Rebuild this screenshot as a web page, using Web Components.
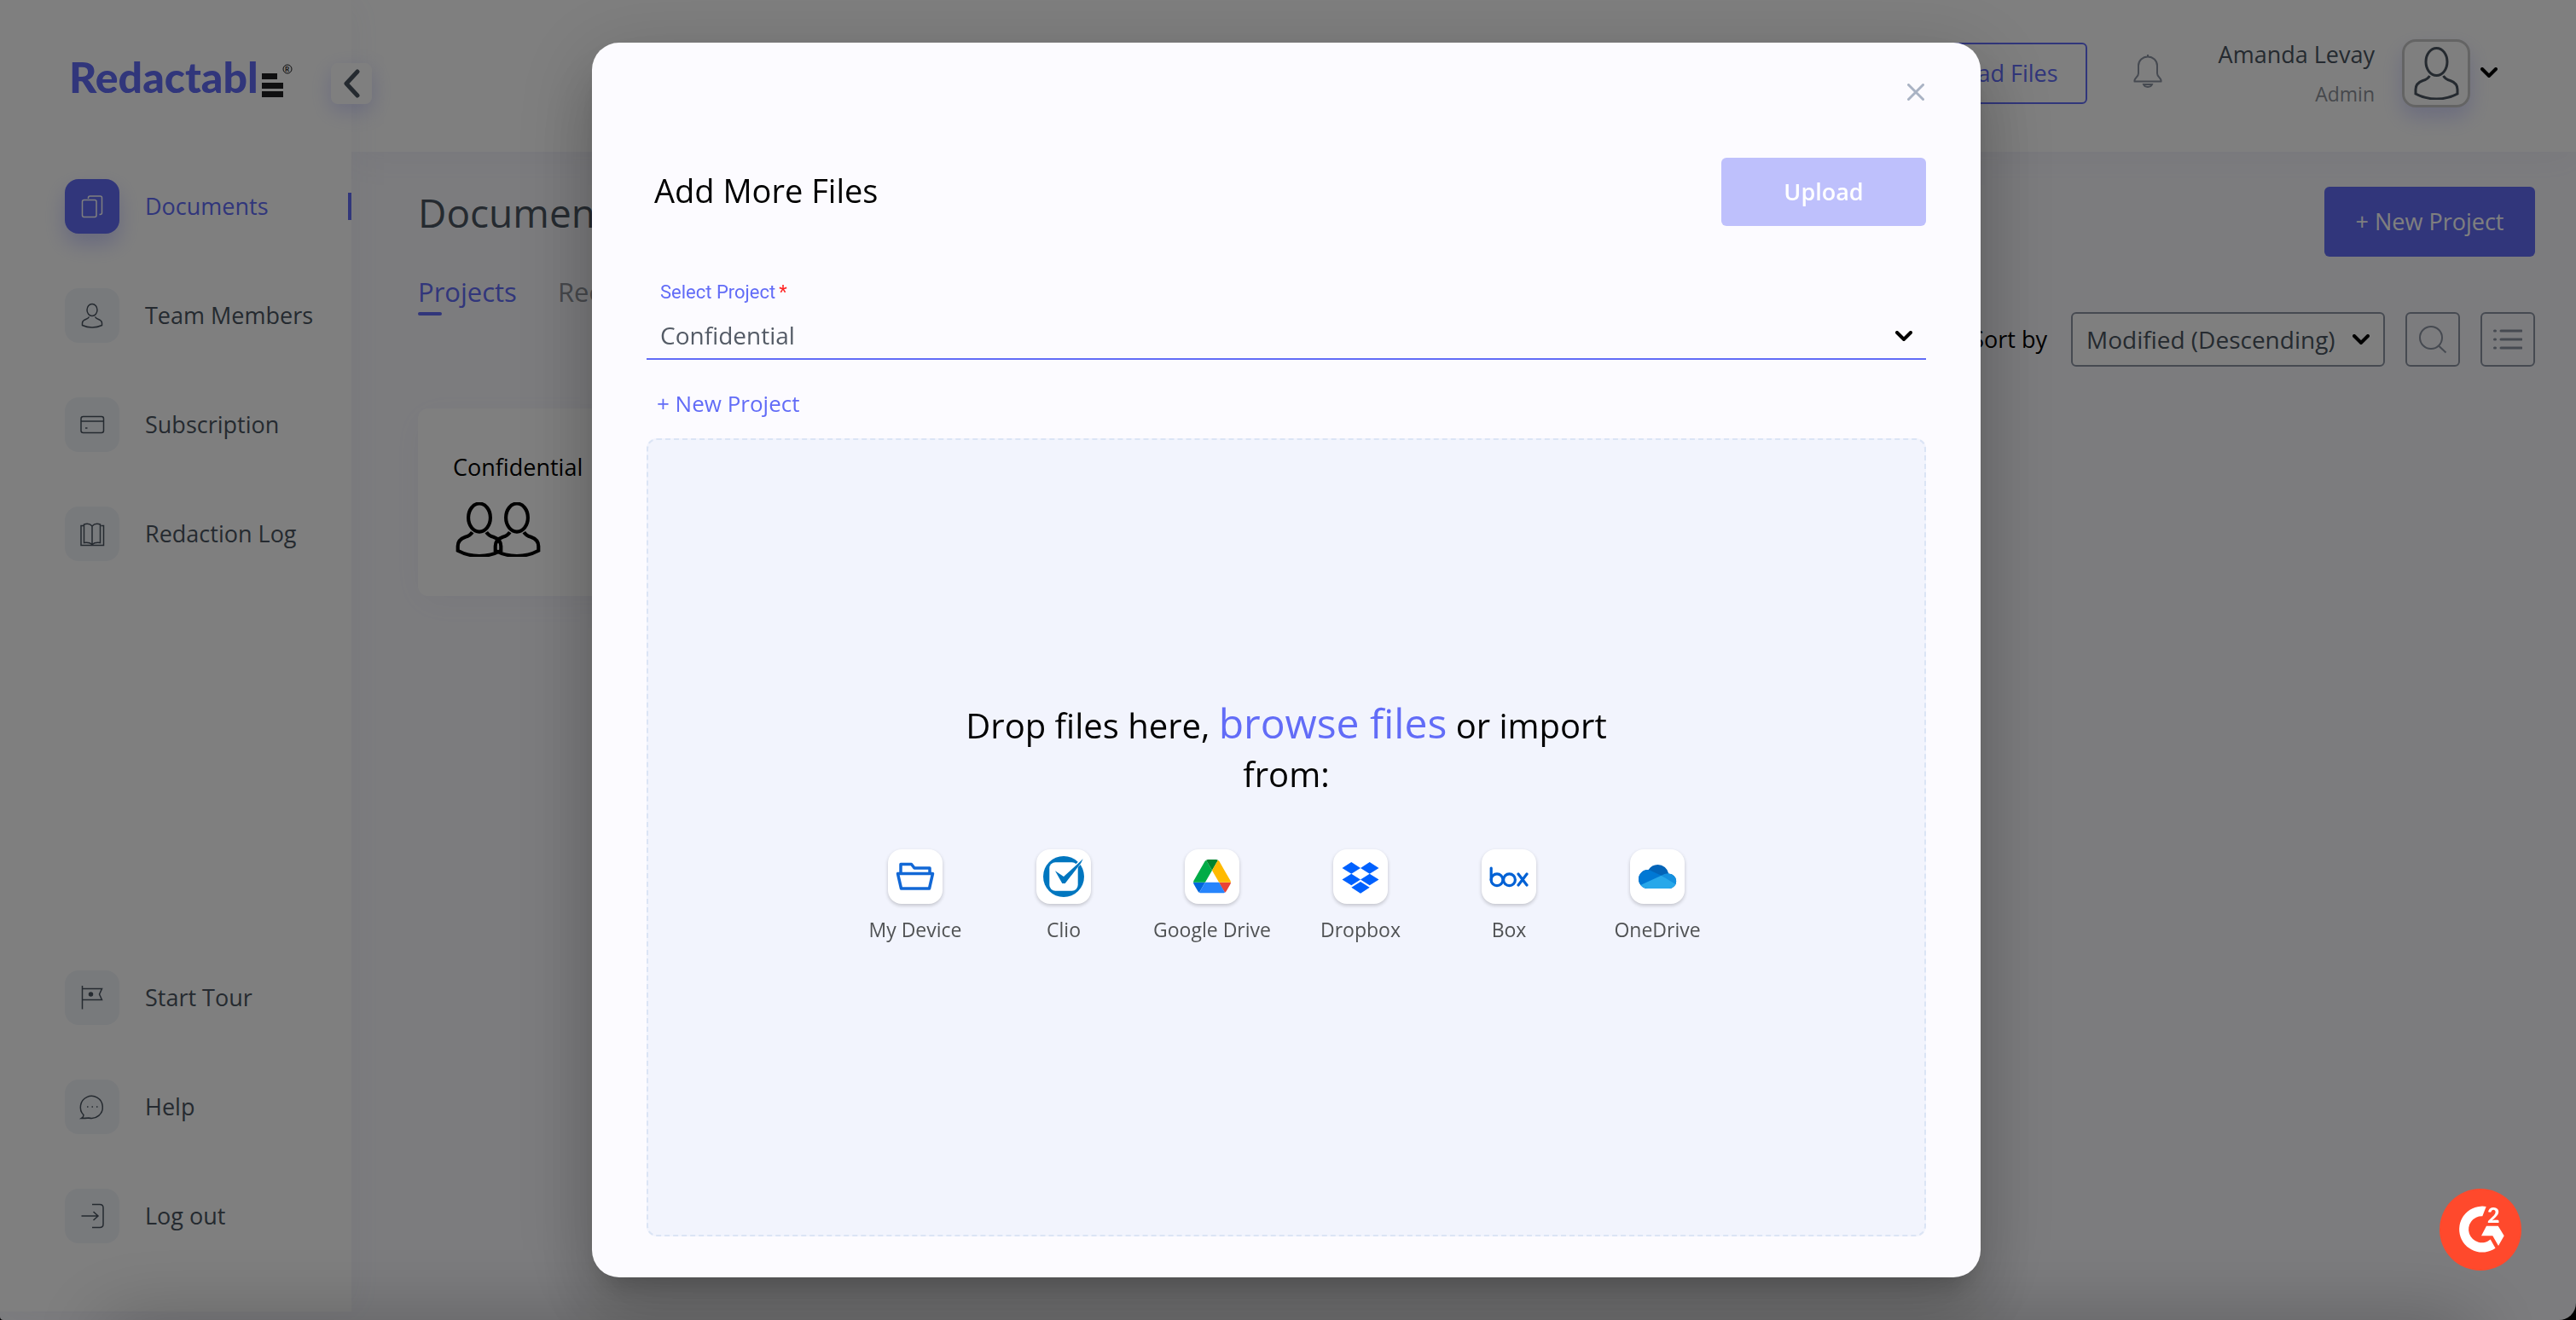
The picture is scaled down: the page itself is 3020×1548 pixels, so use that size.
<!DOCTYPE html>
<html lang="en">
<head>
<meta charset="utf-8">
<title>Redactable</title>
<style>
  :root {
    --accent: #626cf7;
    --ink: #4a5560;
    --muted: #8d9199;
    --line: #8c94a3;
    --tile: #f1f4f9;
    --canvas: #f9f9fd;
  }
  html, body { margin: 0; height: 100%; background: #000; overflow: hidden; }
  body { font: 400 27px/40px "Open Sans", "Noto Sans", sans-serif; color: var(--ink); }
</style>
</head>
<body>
<app-shell>
  <side-nav slot="nav"></side-nav>
  <top-bar slot="top"></top-bar>
  <project-board></project-board>
</app-shell>
<upload-dialog></upload-dialog>
<g2-badge></g2-badge>

<script>
const define = (name, html) => {
  const template = document.createElement('template');
  template.innerHTML = '<style>:host,*,::before,::after{box-sizing:border-box}button,select,a{font:inherit;color:inherit}button{border:0;background:none;padding:0;display:block}svg{display:block}a{text-decoration:none}h1,h2,p{margin:0;font-weight:400}</style>' + html;
  customElements.define(name, class extends HTMLElement {
    constructor() {
      super();
      this.attachShadow({ mode: 'open' }).append(template.content.cloneNode(true));
    }
  });
};

const ICONS = {
  documents: ['0 0 64 64', '<rect x="20.5" y="24.5" width="16.5" height="20" rx="2"/><path d="M27.5 23V22q0-2 2-2h12q2 0 2 2v17.500q0 2-2 2h-1"/>'],
  member: ['0 0 64 64', '<ellipse cx="32" cy="25.500" rx="6" ry="7"/><path d="M28.500 33.500q-1 2-4 3Q20.500 38 20.500 41v2.500q5.500 2.500 11.500 2.500t11.500-2.500V41q0-3-4-4.500-3-1-4-3"/>'],
  card: ['0 0 64 64', '<rect x="19" y="22.500" width="26.500" height="19" rx="2.500"/><path d="M19 28h26.500M24 36h2.500"/>'],
  book: ['0 0 64 64', '<path d="M22 22.500h-3v23h26.500v-23h-3M22.500 21q6-2 9.500 2 3.500-4 9.500-2v21.500q-6-1-9.500 2-3.500-3-9.500-2zM32 23v21.500"/>'],
  flag: ['0 0 64 64', '<path d="M20.500 18v27.500M20.500 21.500h23l-3 6.500 3 6.500h-23"/><circle cx="30.500" cy="28" r="2" fill="currentColor"/>'],
  chat: ['0 0 64 64', '<path d="M22 41.500a13 13 0 1 1 6 3.500q-4 .500-8.500.500 2.500-1.500 2.500-4z"/><path d="M26 32h1.500M31.500 32h1.500M37 32h1.500"/>'],
  exit: ['0 0 64 64', '<path d="M32 18.500h9q4 0 4 4v19q0 4-4 4h-9M19.500 32h19M33.500 27l5.500 5-5.500 5"/>'],
  person: ['0 0 52 62', '<ellipse cx="26" cy="17.500" rx="12.500" ry="16"/><path d="M18 34q-2.500 4-8 5.500-8.500 3-8.500 10.500v5q11 6 24.500 6t24.500-6v-5q0-7.500-8.500-10.500-5.500-1.500-8-5.500"/>'],
  down: ['0 0 20 12', '<path d="M2 2l8 8 8-8" stroke-linecap="round"/>'],
  left: ['0 0 20 34', '<path d="M17 3L4 17l13 14" stroke-linecap="round" stroke-linejoin="round"/>'],
  close: ['0 0 20 20', '<path d="M1.500 1.500l17 17M18.500 1.500l-17 17" stroke-linecap="round"/>'],
  bell: ['0 0 34 40', '<path d="M17 1v3M6 14a11 10.500 0 0 1 22 0v9q0 3 3 5.500 2 2 1.500 4h-31q-.500-2 1.500-4 3-2.500 3-5.500zM12 36a5.200 4 0 0 0 10 0z"/>'],
  search: ['0 0 34 34', '<circle cx="15" cy="15" r="13"/><path d="M24.500 25l8 7.500"/>'],
  list: ['0 0 34 24', '<path d="M9 2h24M9 12h24M9 22h24M1.500 2h1M1.500 12h1M1.500 22h1" stroke-linecap="round"/>'],
  device: ['0 0 64 64', '<g stroke="#1268d6" stroke-width="3.500" stroke-linejoin="round"><path d="M15 28V17.500h12.500l3.500 4.500h18v6"/><path d="M11.500 28.500h41l-4 17.500h-33z"/></g>'],
  clio: ['0 0 64 64', '<g stroke="none"><circle cx="32" cy="32" r="24" fill="#0076bf"/><rect x="15.300" y="15.300" width="33.400" height="33.400" rx="7" fill="#fff"/><path d="M46 17.500L55 9l1 4-8 9z" fill="#fff"/><path d="M22 25.300l10 6.700 16-14.500 6.700-6.200-2.500 5L33.700 40h-3.400z" fill="#0076bf"/></g>'],
  drive: ['-20 -24 127.300 127.300', '<g stroke="none"><path d="m6.600 66.850 3.850 6.650c.8 1.400 1.950 2.500 3.300 3.300l13.750-23.800h-27.500c0 1.550.4 3.100 1.200 4.500z" fill="#0066da"/><path d="m43.650 25-13.750-23.800c-1.350.8-2.500 1.900-3.300 3.300l-25.400 44a9.060 9.060 0 0 0-1.200 4.500h27.500z" fill="#00ac47"/><path d="m73.550 76.800c1.350-.8 2.500-1.900 3.300-3.300l1.600-2.750 7.650-13.250c.8-1.400 1.200-2.950 1.200-4.500h-27.500l5.850 11.500z" fill="#ea4335"/><path d="m43.650 25 13.750-23.800c-1.350-.8-2.900-1.200-4.500-1.200h-18.500c-1.600 0-3.150.45-4.500 1.200z" fill="#00832d"/><path d="m59.800 53h-32.300l-13.750 23.800c1.350.8 2.900 1.200 4.500 1.200h50.800c1.600 0 3.150-.45 4.500-1.200z" fill="#2684fc"/><path d="m73.400 26.500-12.700-22c-.8-1.400-1.950-2.500-3.300-3.300l-13.750 23.800 16.150 28h27.450c0-1.550-.4-3.100-1.200-4.500z" fill="#ffba00"/></g>'],
  dropbox: ['0 0 64 64', '<g stroke="none" fill="#0061ff"><path d="M10.500 22l10.800-7 10.700 7-10.700 6.800zM32 22l10.700-7 10.800 7-10.800 6.800zM10.500 35.500l10.800-6.700L32 35.500l-10.700 6.800zM32 35.500l10.700-6.700 10.800 6.700-10.800 6.800zM21.300 44.800L32 38l10.700 6.800L32 51.700z"/></g>'],
  box: ['0 0 64 64', '<g stroke="#0061d5" stroke-width="3.200" stroke-linecap="round"><circle cx="18" cy="35.700" r="6.900"/><circle cx="32.500" cy="35.700" r="6.900"/><path d="M11.200 22v13.700M43 29l10 13M53 29l-10 13"/></g>'],
  onedrive: ['0 0 64 64', '<defs><clipPath id="cloud"><circle cx="32.500" cy="31" r="13"/><circle cx="21" cy="35" r="11"/><circle cx="45.500" cy="37.300" r="8.700"/><rect x="21" y="33" width="24.500" height="13"/></clipPath></defs><g stroke="none" clip-path="url(#cloud)"><path d="M8 16h48v32H8z" fill="#0364b8"/><path d="M8 24.500q8-2 15 0l13.700 6.200L40 48H8z" fill="#0078d4"/><path d="M36.700 30.700q5-3.500 10-2.200l8 2v14z" fill="#1490df"/><path d="M8 43.800l28.700-13.100L56 42.500V48H8z" fill="#28a8ea"/></g>']
};

/* <ui-icon name size stroke>: line icon drawn in the current text colour */
customElements.define('ui-icon', class extends HTMLElement {
  connectedCallback() {
    if (this.shadowRoot) return;
    const [box, body] = ICONS[this.getAttribute('name')];
    const [w, h] = (this.getAttribute('size') || '64 64').split(' ');
    this.attachShadow({ mode: 'open' }).innerHTML =
      `<style>:host{display:block;flex:none}svg{display:block}</style>
       <svg width="${w}" height="${h}" viewBox="${box}" fill="none" stroke="currentColor" stroke-width="${this.getAttribute('stroke') || 1.5}" aria-hidden="true">${body}</svg>`;
  }
});

define('app-shell', `
<style>
  :host { display: grid; grid-template-columns: 412px 1fr; height: 100vh; background: var(--canvas); border-radius: 0 0 20px 4px; overflow: hidden; isolation: isolate; }
  .nav { position: relative; z-index: 1; height: calc(100vh - 10px); background: #fff; box-shadow: 8px 0 40px rgba(98,108,180,.05); }
  .content { display: flex; flex-direction: column; min-width: 0; }
</style>
<div class="nav"><slot name="nav"></slot></div>
<div class="content"><slot name="top"></slot><slot></slot></div>`);

define('nav-item', `
<style>
  :host { display: block; color: var(--ink); }
  a { display: flex; align-items: center; gap: 30px; position: relative; height: 64px; padding-left: 76px; }
  .tile { width: 64px; height: 64px; border-radius: 16px; background: var(--tile); }
  :host([active]) { color: var(--accent); }
  :host([active]) .tile { background: var(--accent); color: #fff; box-shadow: 0 12px 24px rgba(98,108,247,.3); }
  :host([active]) a::after { content: ""; position: absolute; right: 0; top: 16px; width: 4px; height: 32px; background: var(--accent); }
</style>
<a href="#"><span class="tile"><slot name="icon"></slot></span><slot></slot></a>`);

define('side-nav', `
<style>
  :host { display: flex; flex-direction: column; height: 100%; position: relative; padding: 66px 0 80px; }
  .logo { display: flex; align-items: flex-end; gap: 4px; height: 48px; margin: 0 0 96px 81px; color: var(--accent); }
  .logo b { font: 900 50px/48px Lato, sans-serif; }
  .collapse { position: absolute; left: 388px; top: 74px; width: 48px; height: 48px; border-radius: 8px; background: #fff; color: var(--ink); display: grid; place-items: center; box-shadow: 0 8px 24px rgba(98,108,247,.25); }
  nav { display: flex; flex-direction: column; gap: 64px; }
  nav + nav { margin-top: auto; }
</style>
<div class="logo"><b>Redactabl</b>
  <svg width="38" height="40" viewBox="0 0 38 40" fill="#1e1e20"><path d="M0 12h18v7H0zM0 23h25v7H0zM0 33h25v7H0z"/><circle cx="30" cy="7" r="5" fill="none" stroke="#1e1e20"/><text x="27" y="10" font-family="Lato" font-weight="700" font-size="8">R</text></svg>
</div>
<button class="collapse" aria-label="Collapse menu"><ui-icon name="left" size="20 34" stroke="5"></ui-icon></button>
<nav aria-label="Main">
  <nav-item active><ui-icon slot="icon" name="documents"></ui-icon>Documents</nav-item>
  <nav-item><ui-icon slot="icon" name="member"></ui-icon>Team Members</nav-item>
  <nav-item><ui-icon slot="icon" name="card"></ui-icon>Subscription</nav-item>
  <nav-item><ui-icon slot="icon" name="book"></ui-icon>Redaction Log</nav-item>
</nav>
<nav aria-label="Support">
  <nav-item><ui-icon slot="icon" name="flag"></ui-icon>Start Tour</nav-item>
  <nav-item><ui-icon slot="icon" name="chat"></ui-icon>Help</nav-item>
  <nav-item><ui-icon slot="icon" name="exit"></ui-icon>Log out</nav-item>
</nav>`);

define('top-bar', `
<style>
  :host { display: flex; justify-content: flex-end; align-items: flex-start; height: 178px; padding: 46px 92px 0 0; background: #fff; box-shadow: 0 8px 40px rgba(98,108,180,.06); }
  .upload { height: 72px; margin-top: 4px; padding: 0 32px; border: 2px solid var(--accent); border-radius: 6px; color: var(--accent); }
  .bell { margin: 17px 66px 0 54px; color: var(--line); }
  .who { text-align: right; line-height: 36px; }
  .who small { display: block; font-size: 23px; line-height: 56px; color: var(--muted); }
  .avatar { width: 80px; height: 80px; margin: 0 12px 0 32px; border: 3px solid #c9c9c9; border-radius: 16px; display: grid; place-items: center; background: #fff; box-shadow: 0 12px 24px rgba(98,108,247,.25); }
  .more { margin-top: 33px; color: #000; }
</style>
<button class="upload">Upload Files</button>
<button class="bell" aria-label="Notifications"><ui-icon name="bell" size="34 40" stroke="2"></ui-icon></button>
<div class="who">Amanda Levay<small>Admin</small></div>
<div class="avatar"><ui-icon name="person" size="53 62" stroke="3"></ui-icon></div>
<button class="more" aria-label="Account menu"><ui-icon name="down" size="20 12" stroke="4"></ui-icon></button>`);

define('project-board', `
<style>
  :host { display: block; padding: 41px 48px 0 78px; }
  .head, .tools, .people { display: flex; align-items: center; }
  .head { justify-content: space-between; align-items: flex-start; }
  h1 { font-size: 46px; line-height: 60px; }
  .tabs { display: flex; gap: 48px; margin-top: 17px; font-size: 31px; line-height: 48px; color: var(--muted); }
  .tabs a[aria-current] { color: var(--accent); }
  .tabs a[aria-current]::after { content: ""; display: block; width: 28px; height: 4px; border-radius: 2px; background: var(--accent); }
  .new { width: 247px; height: 82px; border-radius: 6px; background: var(--accent); color: #fff; }
  .tools { justify-content: flex-end; gap: 24px; height: 64px; margin-top: -4px; }
  .tools label { margin-right: 4px; color: #000; }
  .sort { position: relative; }
  .sort select { appearance: none; width: 368px; height: 64px; padding: 0 44px 0 16px; border: 2px solid var(--line); border-radius: 6px; background: #fff; font-size: 28px; }
  .sort ui-icon { position: absolute; right: 18px; top: 26px; color: #000; pointer-events: none; }
  .square { width: 64px; height: 64px; border: 2px solid var(--line); border-radius: 6px; display: grid; place-items: center; color: var(--line); }
  .card { width: 520px; height: 220px; margin-top: 49px; padding: 49px 41px; border-radius: 12px; background: #fff; color: #000; box-shadow: 0 8px 40px rgba(98,108,180,.06); }
  .people { margin: 21px 0 0 3px; }
  .people ui-icon + ui-icon { margin-left: -12px; }
</style>
<div class="head"><h1>Documents</h1><button class="new">+ New Project</button></div>
<nav class="tabs"><a href="#" aria-current="page">Projects</a><a href="#">Recent</a></nav>
<div class="tools">
  <label for="sort">Sort by</label>
  <div class="sort"><select id="sort"><option>Modified (Descending)</option></select><ui-icon name="down" size="20 12" stroke="4"></ui-icon></div>
  <button class="square" aria-label="Search"><ui-icon name="search" size="34 34" stroke="2"></ui-icon></button>
  <button class="square" aria-label="List view"><ui-icon name="list" size="34 24" stroke="3"></ui-icon></button>
</div>
<article class="card">Confidential
  <div class="people"><ui-icon name="person" size="56 64" stroke="4"></ui-icon><ui-icon name="person" size="56 64" stroke="4"></ui-icon></div>
</article>`);

define('import-source', `
<style>
  :host { display: block; width: 174px; }
  button { width: 100%; display: flex; flex-direction: column; align-items: center; gap: 14px; font-size: 23px; line-height: 32px; color: #505254; }
  .tile { width: 64px; height: 64px; border-radius: 16px; background: #fff; box-shadow: 0 2px 4px rgba(0,0,0,.2); }
</style>
<button><span class="tile"><slot name="icon"></slot></span><slot></slot></button>`);

define('upload-dialog', `
<style>
  :host { position: fixed; inset: 0; display: grid; place-items: center; padding-right: 4px; background: rgba(0,0,0,.5); color: #000; }
  :host::after { content: ""; position: absolute; left: 140px; right: 140px; bottom: -60px; height: 40px; box-shadow: 0 0 90px 20px rgba(0,0,0,.25); }
  section { position: relative; z-index: 1; display: flex; flex-direction: column; width: 1628px; max-width: calc(100vw - 64px); height: calc(100vh - 100px); padding: 48px 64px; border-radius: 32px; background: #fcfbff; box-shadow: 0 22px 30px -14px rgba(0,0,0,.2), 0 48px 76px 6px rgba(0,0,0,.14), 0 18px 92px 16px rgba(0,0,0,.12); }
  .close { align-self: flex-end; margin-right: 2px; color: #a9b3c4; }
  header { display: flex; justify-content: space-between; align-items: center; height: 80px; margin-top: 67px; padding-left: 9px; }
  h2 { font-size: 38px; line-height: 56px; padding-bottom: 4px; }
  .send { width: 240px; height: 80px; border-radius: 6px; background: #bec0fc; color: #fff; font-weight: 600; }
  .field { position: relative; margin-top: 64px; border-bottom: 2px solid var(--accent); }
  label { display: block; padding-left: 16px; font: 400 22px/28px Roboto, sans-serif; color: var(--accent); }
  label span { padding-left: 4px; color: #f22; }
  select { appearance: none; display: block; width: 100%; height: 63px; padding: 8px 16px 0; border: 0; background: none; color: #545b66; font-size: 28px; }
  .field ui-icon { position: absolute; right: 16px; bottom: 20px; pointer-events: none; }
  .create { align-self: flex-start; margin: 31px 0 21px 12px; color: var(--accent); font-size: 26px; }
  .drop { flex: 1; display: flex; flex-direction: column; align-items: center; justify-content: center; border: 2px dashed #dbe4f5; border-radius: 12px; background: #f2f4fd; padding-bottom: 40px; }
  .drop p { max-width: 800px; font-size: 40px; line-height: 57px; text-align: center; }
  .drop p a { font-size: 48px; font-weight: 500; color: var(--accent); }
  .sources { display: flex; margin-top: 60px; }
</style>
<section role="dialog" aria-labelledby="title">
  <button class="close" aria-label="Close"><ui-icon name="close" size="20 20" stroke="3"></ui-icon></button>
  <header><h2 id="title">Add More Files</h2><button class="send">Upload</button></header>
  <div class="field">
    <label for="project">Select Project<span>*</span></label>
    <select id="project"><option>Confidential</option></select>
    <ui-icon name="down" size="20 12" stroke="4"></ui-icon>
  </div>
  <button class="create">+ New Project</button>
  <div class="drop">
    <p>Drop files here, <a href="#">browse files</a> or import from:</p>
    <div class="sources">
      <import-source><ui-icon slot="icon" name="device"></ui-icon>My Device</import-source>
      <import-source><ui-icon slot="icon" name="clio"></ui-icon>Clio</import-source>
      <import-source><ui-icon slot="icon" name="drive"></ui-icon>Google Drive</import-source>
      <import-source><ui-icon slot="icon" name="dropbox"></ui-icon>Dropbox</import-source>
      <import-source><ui-icon slot="icon" name="box"></ui-icon>Box</import-source>
      <import-source><ui-icon slot="icon" name="onedrive"></ui-icon>OneDrive</import-source>
    </div>
  </div>
</section>`);

define('g2-badge', `
<style>
  :host { position: fixed; right: 64px; bottom: 58px; display: block; }
</style>
<a href="#" aria-label="G2 reviews"><svg width="96" height="96" viewBox="0 0 96 96"><circle cx="48" cy="48" r="48" fill="#ff492c"/><g fill="#fff"><path d="M54.700 21A27 27 0 1 0 65.500 69.800L59.700 59.500A15.500 15.500 0 1 1 50.300 32.300z"/><path d="M55 43.700h13.700l7 11.600L69 67l-6.700-11.700H49z"/><text x="56" y="40" font-family="Lato" font-weight="900" font-size="25">2</text></g></svg></a>`);
</script>
</body>
</html>
